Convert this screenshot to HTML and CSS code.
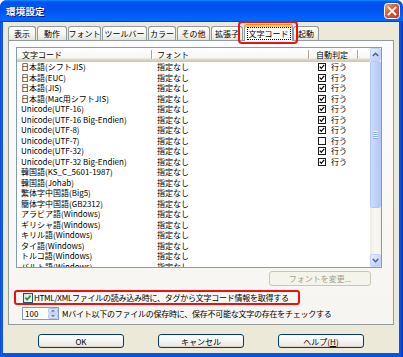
FILE: index.html
```html
<!DOCTYPE html>
<html lang="ja">
<head>
<meta charset="utf-8">
<title>環境設定</title>
<link rel="stylesheet" href="styles.css">
</head>
<body>
<div class="window">
  <div class="titlebar">
    <span class="title">環境設定</span>
    <svg class="close" width="16" height="16" viewBox="0 0 16 16">
      <defs>
        <linearGradient id="cg" x1="0" y1="0" x2="1" y2="1">
          <stop offset="0" stop-color="#F0A38C"/>
          <stop offset="0.45" stop-color="#DA5B36"/>
          <stop offset="1" stop-color="#C03A18"/>
        </linearGradient>
      </defs>
      <rect x="0.5" y="0.5" width="15" height="15" rx="3" fill="url(#cg)" stroke="#FFFFFF"/>
      <path d="M4.5 4.5 L11.5 11.5 M11.5 4.5 L4.5 11.5" stroke="#FFFFFF" stroke-width="1.8" stroke-linecap="square"/>
    </svg>
  </div>
  <div class="client">
    <div class="tabs">
      <div class="tab w1">表示</div>
      <div class="tab w2">動作</div>
      <div class="tab w3">フォント</div>
      <div class="tab w4">ツールバー</div>
      <div class="tab w5">カラー</div>
      <div class="tab w6">その他</div>
      <div class="tab w7">拡張子</div>
      <div class="tab sel"><span class="focus">文字コード</span></div>
      <div class="tab w9">起動</div>
    </div>
    <div class="panel">
      <div class="lv">
        <div class="lv-main">
          <div class="lv-head">
            <div class="hc c1"><span class="ht">文字コード</span><span class="sep"></span></div>
            <div class="hc c2"><span class="ht">フォント</span><span class="sep"></span></div>
            <div class="hc c3"><span class="ht">自動判定</span><span class="sep"></span></div>
            <div class="hc c4"></div>
          </div>
          <div class="lv-body">
            <div class="row"><span class="c1">日本語(シフトJIS)</span><span class="c2">指定なし</span><span class="c3"><svg class="cb" width="8" height="8" viewBox="0 0 8 8"><rect x="0.5" y="0.5" width="7" height="7" fill="#fff" stroke="#1c1c1c"/><path d="M1.8 3.6 L3.3 5.3 L6.2 1.9" fill="none" stroke="#000" stroke-width="1.2"/></svg>行う</span></div>
            <div class="row"><span class="c1">日本語(EUC)</span><span class="c2">指定なし</span><span class="c3"><svg class="cb" width="8" height="8" viewBox="0 0 8 8"><rect x="0.5" y="0.5" width="7" height="7" fill="#fff" stroke="#1c1c1c"/><path d="M1.8 3.6 L3.3 5.3 L6.2 1.9" fill="none" stroke="#000" stroke-width="1.2"/></svg>行う</span></div>
            <div class="row"><span class="c1">日本語(JIS)</span><span class="c2">指定なし</span><span class="c3"><svg class="cb" width="8" height="8" viewBox="0 0 8 8"><rect x="0.5" y="0.5" width="7" height="7" fill="#fff" stroke="#1c1c1c"/><path d="M1.8 3.6 L3.3 5.3 L6.2 1.9" fill="none" stroke="#000" stroke-width="1.2"/></svg>行う</span></div>
            <div class="row"><span class="c1">日本語(Mac用シフトJIS)</span><span class="c2">指定なし</span><span class="c3"><svg class="cb" width="8" height="8" viewBox="0 0 8 8"><rect x="0.5" y="0.5" width="7" height="7" fill="#fff" stroke="#1c1c1c"/><path d="M1.8 3.6 L3.3 5.3 L6.2 1.9" fill="none" stroke="#000" stroke-width="1.2"/></svg>行う</span></div>
            <div class="row"><span class="c1">Unicode(UTF-16)</span><span class="c2">指定なし</span><span class="c3"><svg class="cb" width="8" height="8" viewBox="0 0 8 8"><rect x="0.5" y="0.5" width="7" height="7" fill="#fff" stroke="#1c1c1c"/><path d="M1.8 3.6 L3.3 5.3 L6.2 1.9" fill="none" stroke="#000" stroke-width="1.2"/></svg>行う</span></div>
            <div class="row"><span class="c1">Unicode(UTF-16 Big-Endien)</span><span class="c2">指定なし</span><span class="c3"><svg class="cb" width="8" height="8" viewBox="0 0 8 8"><rect x="0.5" y="0.5" width="7" height="7" fill="#fff" stroke="#1c1c1c"/><path d="M1.8 3.6 L3.3 5.3 L6.2 1.9" fill="none" stroke="#000" stroke-width="1.2"/></svg>行う</span></div>
            <div class="row"><span class="c1">Unicode(UTF-8)</span><span class="c2">指定なし</span><span class="c3"><svg class="cb" width="8" height="8" viewBox="0 0 8 8"><rect x="0.5" y="0.5" width="7" height="7" fill="#fff" stroke="#1c1c1c"/><path d="M1.8 3.6 L3.3 5.3 L6.2 1.9" fill="none" stroke="#000" stroke-width="1.2"/></svg>行う</span></div>
            <div class="row"><span class="c1">Unicode(UTF-7)</span><span class="c2">指定なし</span><span class="c3"><svg class="cb" width="8" height="8" viewBox="0 0 8 8"><rect x="0.5" y="0.5" width="7" height="7" fill="#fff" stroke="#1c1c1c"/></svg>行う</span></div>
            <div class="row"><span class="c1">Unicode(UTF-32)</span><span class="c2">指定なし</span><span class="c3"><svg class="cb" width="8" height="8" viewBox="0 0 8 8"><rect x="0.5" y="0.5" width="7" height="7" fill="#fff" stroke="#1c1c1c"/><path d="M1.8 3.6 L3.3 5.3 L6.2 1.9" fill="none" stroke="#000" stroke-width="1.2"/></svg>行う</span></div>
            <div class="row"><span class="c1">Unicode(UTF-32 Big-Endien)</span><span class="c2">指定なし</span><span class="c3"><svg class="cb" width="8" height="8" viewBox="0 0 8 8"><rect x="0.5" y="0.5" width="7" height="7" fill="#fff" stroke="#1c1c1c"/><path d="M1.8 3.6 L3.3 5.3 L6.2 1.9" fill="none" stroke="#000" stroke-width="1.2"/></svg>行う</span></div>
            <div class="row"><span class="c1">韓国語(KS_C_5601-1987)</span><span class="c2">指定なし</span></div>
            <div class="row"><span class="c1">韓国語(Johab)</span><span class="c2">指定なし</span></div>
            <div class="row"><span class="c1">繁体字中国語(Big5)</span><span class="c2">指定なし</span></div>
            <div class="row"><span class="c1">簡体字中国語(GB2312)</span><span class="c2">指定なし</span></div>
            <div class="row"><span class="c1">アラビア語(Windows)</span><span class="c2">指定なし</span></div>
            <div class="row"><span class="c1">ギリシャ語(Windows)</span><span class="c2">指定なし</span></div>
            <div class="row"><span class="c1">キリル語(Windows)</span><span class="c2">指定なし</span></div>
            <div class="row"><span class="c1">タイ語(Windows)</span><span class="c2">指定なし</span></div>
            <div class="row"><span class="c1">トルコ語(Windows)</span><span class="c2">指定なし</span></div>
            <div class="row"><span class="c1">バルト語(Windows)</span><span class="c2">指定なし</span></div>
          </div>
        </div>
        <div class="sb">
          <div class="sb-btn">
            <svg width="7" height="5" viewBox="0 0 7 5"><path d="M0.8 4 L3.5 1.3 L6.2 4" fill="none" stroke="#4D6185" stroke-width="1.5"/></svg>
          </div>
          <div class="sb-thumb">
            <span class="grip"></span><span class="grip"></span><span class="grip"></span><span class="grip"></span>
          </div>
          <div class="sb-track"></div>
          <div class="sb-btn">
            <svg width="7" height="5" viewBox="0 0 7 5"><path d="M0.8 1 L3.5 3.7 L6.2 1" fill="none" stroke="#4D6185" stroke-width="1.5"/></svg>
          </div>
        </div>
      </div>
      <div class="fbtn">フォントを変更...</div>
      <div class="autodetect">
        <svg class="xpcb" width="10" height="10" viewBox="0 0 10 10">
          <defs>
            <linearGradient id="cbg" x1="0" y1="0" x2="1" y2="1">
              <stop offset="0" stop-color="#DCDCD7"/>
              <stop offset="1" stop-color="#FFFFFF"/>
            </linearGradient>
          </defs>
          <rect x="0.5" y="0.5" width="9" height="9" fill="url(#cbg)" stroke="#1C5180"/>
          <path d="M2.4 4.6 L4.1 6.6 L7.6 2.6" fill="none" stroke="#21A121" stroke-width="1.7"/>
        </svg>
        <span class="tight">HTML/XMLファイルの読み込み時に、タグから文字コード情報を取得する</span>
      </div>
      <div class="spinrow">
        <div class="edit">
          <span>100</span>
          <svg class="spin" width="10" height="11" viewBox="0 0 10 11">
            <rect x="0.5" y="0.5" width="9" height="4.6" rx="1" fill="#D5E0FB" stroke="#B3C5F2"/>
            <rect x="0.5" y="5.9" width="9" height="4.6" rx="1" fill="#D5E0FB" stroke="#B3C5F2"/>
            <path d="M3 3.6 L5 1.8 L7 3.6 Z" fill="#4D6185"/>
            <path d="M3 7.3 L5 9.1 L7 7.3 Z" fill="#4D6185"/>
          </svg>
        </div>
        <span class="spintext tight">Mバイト以下のファイルの保存時に、保存不可能な文字の存在をチェックする</span>
      </div>
    </div>
    <div class="buttons">
      <div class="btn">OK</div>
      <div class="btn">キャンセル</div>
      <div class="btn">ヘルプ(<u>H</u>)</div>
    </div>
  </div>
</div>
</body>
</html>
```
FILE: styles.css
```css
* { box-sizing: border-box; }
html, body { margin: 0; padding: 0; }
body {
  width: 403px;
  height: 357px;
  overflow: hidden;
  background: #ffffff;
  font-family: "Noto Sans CJK JP", "Noto Sans", sans-serif;
  font-size: 8px;
  color: #000;
}
.window {
  width: 403px;
  height: 357px;
  background: linear-gradient(to right, #0831D9 0, #166AEE 1px, #0855DD 2px, #0855DD 401px, #0831D9 402px);
  border-radius: 7px 7px 0 0;
  display: flex;
  flex-direction: column;
}
.titlebar {
  height: 22px;
  flex: none;
  display: flex;
  align-items: center;
  padding: 0 3px 0 6px;
  border-radius: 7px 7px 0 0;
  background: linear-gradient(180deg, #0997ff, #0053ee 8%, #0050ee 40%, #06f 88%, #06f 93%, #005bff 95%, #003dd7 96%, #003dd7);
}
.title {
  color: #fff;
  font-weight: bold;
  font-size: 9.5px;
  text-shadow: 1px 1px #0F1089;
  letter-spacing: 0.2px;
}
.close { margin-left: auto; display: block; }
.client {
  flex: 1;
  margin: 0 4px 4px 3px;
  background: #ECE9D8;
  padding: 2px 5px 0 5px;
  display: flex;
  flex-direction: column;
}
.tabs {
  display: flex;
  gap: 1px;
  height: 16px;
  align-items: flex-end;
  position: relative;
  z-index: 1;
}
.tab {
  height: 14px;
  border: 1px solid #919B9C;
  border-bottom: none;
  border-radius: 3px 3px 0 0;
  background: linear-gradient(#FFFFFF, #F3F3EF 60%, #E4E3DB);
  display: flex;
  align-items: center;
  justify-content: center;
  line-height: 1;
  white-space: nowrap;
}
.w1 { width: 28px; }
.w2 { width: 30px; }
.w3 { width: 33px; }
.w4 { width: 45px; }
.w5 { width: 28px; }
.w6 { width: 33px; }
.w7 { width: 32px; }
.w9 { width: 26px; }
.tab.sel {
  width: 49px;
  height: 17px;
  margin-bottom: -1px;
  margin-right: -1px;
  background: #FCFCFE;
  border-top: 1px solid #E68B2C;
  box-shadow: inset 0 2px #FFC83C;
  position: relative;
  padding-top: 1px;
}
.tab.sel::after {
  content: "";
  position: absolute;
  left: -7px;
  right: -6px;
  top: -4px;
  bottom: -3px;
  border: 2px solid #EE1111;
  border-radius: 4px;
}
.focus {
  outline: 1px dotted #000;
  outline-offset: 0;
  padding: 1px 1px;
  line-height: 9px;
}
.panel {
  height: 285px;
  flex: none;
  border: 1px solid #919B9C;
  background: linear-gradient(#FCFCFE, #F6F5F1);
  padding: 6px 11px 0 7px;
  display: flex;
  flex-direction: column;
}
.lv {
  width: 366px;
  height: 221px;
  flex: none;
  border: 1px solid #7F9DB9;
  background: #fff;
  display: flex;
}
.lv-main {
  width: 353px;
  display: flex;
  flex-direction: column;
  overflow: hidden;
}
.lv-head {
  height: 14px;
  flex: none;
  display: flex;
  background: linear-gradient(#FFFFFF 0, #F8F7F2 70%, #E2DECD 79%, #D6D2C2 86%, #CBC7B8 100%);
}
.hc {
  display: flex;
  align-items: center;
  height: 100%;
  padding-bottom: 1px;
}
.ht { flex: 1; white-space: nowrap; }
.sep {
  width: 2px;
  height: 9px;
  border-left: 1px solid #ACA899;
  border-right: 1px solid #FFFFFF;
  margin-right: 1px;
}
.hc.c1 { width: 137px; padding-left: 5px; }
.hc.c2 { width: 157px; padding-left: 3px; }
.hc.c3 { width: 49px; padding-left: 5px; }
.hc.c4 { width: 10px; }
.lv-body {
  flex: 1;
  overflow: hidden;
}
.row {
  display: flex;
  height: 10.5px;
  line-height: 10.5px;
  white-space: nowrap;
}
.row .c1 { width: 137px; padding-left: 4px; }
.row .c2 { width: 157px; padding-left: 3px; }
.row .c3 { width: 49px; padding-left: 7px; display: flex; align-items: center; }
.cb { margin-right: 5px; flex: none; }
.sb {
  width: 11px;
  display: flex;
  flex-direction: column;
  background: linear-gradient(to right, #EEEDE5, #F9F8F4 50%, #F2F1EA);
}
.sb-btn {
  height: 13px;
  flex: none;
  border: 1px solid #C3D3FD;
  border-radius: 2px;
  background: linear-gradient(135deg, #E8F0FE, #C8D7FB 60%, #B9CCF8);
  display: flex;
  align-items: center;
  justify-content: center;
}
.sb-btn svg { display: block; }
.sb-thumb {
  height: 147px;
  flex: none;
  border: 1px solid #B5C8F5;
  border-radius: 2px;
  background: linear-gradient(to right, #CCDAFC, #C1D3FB 50%, #B4C8F8);
  display: flex;
  flex-direction: column;
  align-items: center;
  justify-content: center;
  gap: 1px;
}
.grip {
  width: 5px;
  height: 1px;
  background: #EEF4FE;
  box-shadow: 0 1px #8CB0F8;
}
.sb-track { flex: 1; }
.fbtn {
  align-self: flex-end;
  margin: 3px 11px 0 0;
  width: 102px;
  height: 15px;
  flex: none;
  border: 1px solid #C9C7BA;
  border-radius: 3px;
  background: #F5F4EA;
  color: #A19F8D;
  display: flex;
  align-items: center;
  justify-content: center;
  white-space: nowrap;
}
.autodetect {
  margin: 4px 0 0 -2px;
  width: 286px;
  height: 15px;
  flex: none;
  border: 2px solid #EE1111;
  border-radius: 3px;
  display: flex;
  align-items: center;
  padding-left: 7px;
  white-space: nowrap;
}
.tight { letter-spacing: -0.25px; }
.xpcb { flex: none; margin-right: 1px; display: block; }
.spinrow {
  margin: 1px 0 0 6px;
  height: 14px;
  flex: none;
  display: flex;
  align-items: center;
  white-space: nowrap;
}
.edit {
  width: 37px;
  height: 13px;
  border: 1px solid #7F9DB9;
  background: #fff;
  display: flex;
  align-items: center;
  padding-left: 2px;
}
.spin { margin-left: auto; display: block; }
.spintext { margin-left: 3px; }
.buttons {
  display: flex;
  gap: 34px;
  margin-top: 9px;
  padding-left: 30px;
}
.btn {
  width: 86px;
  height: 14px;
  border: 1px solid #003C74;
  border-radius: 3px;
  background: linear-gradient(#FFFFFF, #F4F4F0 50%, #ECEBE6 85%, #D6D0C5);
  display: flex;
  align-items: center;
  justify-content: center;
  white-space: nowrap;
}
.btn u { text-decoration: underline; }
```
